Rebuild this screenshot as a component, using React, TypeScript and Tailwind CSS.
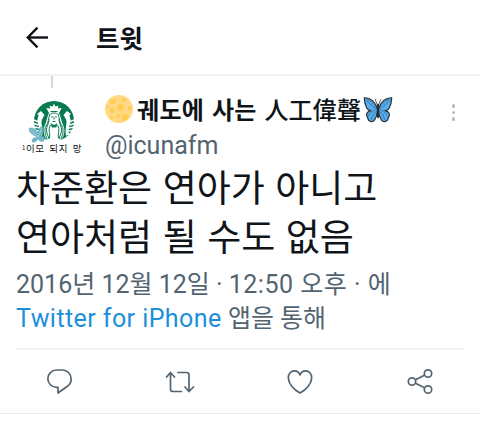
import type { ReactNode } from 'react';

function BackArrow() {
  return (
    <svg viewBox="0 0 24 24" className="h-6 w-6" fill="none" stroke="#0f1419" strokeWidth="2.4">
      <path d="M24 12.5H4" />
      <path d="M13.500 2.700L3.800 12.500l9.700 9.800" />
    </svg>
  );
}

function Avatar() {
  return (
    <div className="relative ml-[2px] h-[60px] w-[60px]">
      <svg viewBox="0 0 60 60" className="h-full w-full">
        <circle cx="32" cy="27" r="20" fill="#087a50" />
        {/* Crown, face and hair */}
        <g fill="#fff">
          <path d="M32 9.500l1.300 3 3.200-.8-.8 2.800 4-.5-3 5.500h-9.400l-3-5.500 4 .5-.8-2.800 3.200.8z" />
          <path d="M26.500 20c2-3 9-3 11 0 2 5 2 8 4 12 1.500 4 1 8-1 12l-3.500 3H27l-3.500-3c-2-4-2.500-8-1-12 2-4 2-7 4-12z" />
          <path d="M15 20l4-3 3.500 4c-1.500 3-3.500 5-3 8 .5 4 1.500 8 .5 13l-3-2c1-5-.5-9-1.500-12-.5-3 1-5 1-7z" />
          <path d="M49 20l-4-3-3.500 4c1.500 3 3.500 5 3 8-.5 4-1.500 8-.5 13l3-2c-1-5 .5-9 1.500-12 .5-3-1-5-1-7z" />
        </g>
        <g fill="none" stroke="#087a50" strokeWidth="1">
          <path d="M28 20c-2 5-1 8-4 12-2 4-1 8 1 13" />
          <path d="M27 25c0 6-4 8-2 14l2 6" />
          <path d="M36 20c2 5 1 8 4 12 2 4 1 8-1 13" />
          <path d="M37 25c0 6 4 8 2 14l-2 6" />
          <path d="M28.500 31c-3 5 0 7-1 13M35.500 31c3 5 0 7 1 13" />
          <path d="M28 20.500c1-2 7-2 8 0M29.300 23h2M32.900 23h2M30.700 27.500h2.800M32 23.500v2" />
          <path d="M28.500 17.500h7" />
        </g>
        {/* Tail fins */}
        <path
          d="M11.500 26l4.500 1.500M11.500 29.500l5 1.500M12.500 33l4.500 1M14 36.500l3.500.5M52.500 26l-4.500 1.500M52.500 29.500l-5 1.500M51.500 33l-4.500 1M50 36.500l-3.500.5M47.500 40l-2.500.3"
          stroke="#fff"
          strokeWidth="1.400"
        />
        <path d="M28.500 28.500c2 3 5 3 7 0l-1 4.500c-1 1-4 1-5 0z" fill="#087a50" />
        <path d="M32 33c-3 3-3.500 7-2.500 14h5c1-7 .5-11-2.500-14z" fill="#fff" />
        <path d="M15 43c-5-2-9-5-8-9 5-1 8 2 9 6 0-5 2-8 5-8 2 4 0 8-3 10 4-1 6 1 4 5-3 2-5 0-6-2-1 3-4 4-6 3-1-2 1-5 5-5z" fill="#5aa9bd" opacity=".85" />
        <path d="M8 35l8 8 4-9" fill="none" stroke="#a5d5de" strokeWidth=".8" />
      </svg>
      <span className="absolute left-0 top-[48px] whitespace-pre font-['Noto_Sans_CJK_KR',sans-serif] text-[9.500px] leading-[12px] tracking-[0.600px] text-[#111] [word-spacing:2px]">
        <span className="align-top text-[6px]">1</span>이모 되지 망
      </span>
    </div>
  );
}

function MoonEmoji() {
  return (
    <svg viewBox="0 0 36 36" className="h-7 w-7 shrink-0">
      <circle cx="18" cy="18" r="18" fill="#ffd983" />
      <g fill="#ffcc4d">
        <circle cx="10.500" cy="8.500" r="3.500" />
        <circle cx="20" cy="16" r="4" />
        <circle cx="24.500" cy="6.500" r="2.500" />
        <circle cx="9" cy="20" r="3" />
        <circle cx="17" cy="27" r="2.300" />
        <circle cx="26" cy="28.500" r="4" />
        <circle cx="32" cy="17" r="2.500" />
        <circle cx="4" cy="15" r="1.500" />
        <circle cx="9" cy="29" r="2" />
      </g>
    </svg>
  );
}

function ButterflyEmoji() {
  return (
    <svg viewBox="0 0 36 36" className="ml-[2px] h-[30px] w-[30px] shrink-0" strokeLinejoin="round">
      <g fill="#55acee" stroke="#292f33" strokeWidth="1.400">
        <path d="M17.500 17C14 9 8 4 1.500 4.500c.5 4 .5 7 2 10 1 3 3 5 6 5.500-4 1-6 3-5 6 .5 2 1.500 2.500 1.500 4 1 4 6 4 8 1 2-3 3-7 3.500-11z" />
        <path d="M18.500 17C22 9 28 4 34.500 4.500c-.5 4-.5 7-2 10-1 3-3 5-6 5.500 4 1 6 3 5 6-.5 2-1.500 2.500-1.500 4-1 4-6 4-8 1-2-3-3-7-3.500-11z" />
      </g>
      <g fill="none" stroke="#292f33" strokeWidth=".5">
        <path d="M17 18C12 16 7 11 3 6M17 18c-3-6-7-9-12-12M17 19c-5 0-8 3-11 8M17 20c-4 3-6 6-7 11" />
        <path d="M19 18c5-2 10-7 14-12M19 18c3-6 7-9 12-12M19 19c5 0 8 3 11 8M19 20c4 3 6 6 7 11" />
        <path d="M17.500 14L14.500 6M18.500 14l3-8" strokeWidth=".9" />
      </g>
      <path d="M18 13v15" stroke="#292f33" strokeWidth="2.400" strokeLinecap="round" />
    </svg>
  );
}

function ActionIcon({ children }: { children: ReactNode }) {
  return (
    <button className="flex h-8 w-8 items-center justify-center">
      <svg
        viewBox="0 0 32 32"
        className="h-8 w-8"
        fill="none"
        stroke="#536471"
        strokeWidth="1.700"
        strokeLinecap="round"
        strokeLinejoin="round"
      >
        {children}
      </svg>
    </button>
  );
}

export default function App() {
  return (
    <div className="h-[424px] w-[480px] overflow-hidden bg-white font-[Roboto,'Noto_Sans_CJK_KR',sans-serif] text-[#0f1419]">
      {/* Header */}
      <header className="flex h-[76px] items-center border-b-2 border-[#f1f3f4] pl-6">
        <BackArrow />
        <h1 className="ml-12 font-['Noto_Sans_CJK_KR',sans-serif] text-[25.500px] font-bold leading-9">트윗</h1>
      </header>

      <article>
        <div className="ml-[51px] h-3 w-0.5 bg-[#cfd9de]" />

        {/* Author */}
        <div className="flex h-[74px] pl-5">
          <div className="pt-1.5">
            <Avatar />
          </div>
          <div className="ml-[23px] flex-1 pt-1">
            <div className="flex h-[34px] items-center whitespace-pre font-['Noto_Sans_CJK_KR',sans-serif] text-[24px] leading-[34px]">
              <MoonEmoji />
              <span className="ml-1 font-bold tracking-[0.300px] [word-spacing:2px]">궤도에 사는 </span>
              <span className="font-medium tracking-[0.200px]">人工偉聲</span>
              <ButterflyEmoji />
            </div>
            <div className="text-[25px] leading-[40px] text-[#536471]">@icunafm</div>
          </div>
          <div className="mr-[25px] flex flex-col gap-[3px] pt-4">
            <i className="h-[3.500px] w-[3.500px] rounded-full bg-[#b3bcc2]" />
            <i className="h-[3.500px] w-[3.500px] rounded-full bg-[#b3bcc2]" />
            <i className="h-[3.500px] w-[3.500px] rounded-full bg-[#b3bcc2]" />
          </div>
        </div>

        {/* Tweet text */}
        <p className="whitespace-pre pl-4 font-['Noto_Sans_CJK_KR',sans-serif] text-[37px] leading-[49px] [word-spacing:2.200px]">
          {'차준환은 연아가 아니고\n연아처럼 될 수도 없음'}
        </p>

        {/* Date and source */}
        <div className="whitespace-pre pl-4 pt-2 text-[25px] leading-[34px] text-[#536471]">
          <div>
            2016년 12월 12일 · <span className="tracking-[0.500px]">12:50 오후 · 에</span>
          </div>
          <div>
            <span className="tracking-[0.430px] text-[#1d8fdb]">Twitter for iPhone</span> 앱을 통해
          </div>
        </div>

        <div className="mx-4 mt-3 h-0.5 bg-[#eff1f2]" />

        {/* Actions */}
        <div className="flex h-[63px] items-center justify-between px-11">
          <ActionIcon>
            <path d="M12.500 4h6a9 9 0 0 1 8.700 9c0 3.400-1.700 6-4.500 7.800L14 27v-5.700h-1.500a8.650 8.650 0 0 1 0-17.300z" />
          </ActionIcon>
          <ActionIcon>
            <path d="M2.500 11L6.500 6.500l4 4.500M6.500 6.500v16.500a2.500 2.500 0 0 0 2.500 2.500h8.500M14 6.500h8.500a2.500 2.500 0 0 1 2.500 2.500v16.500M21 21l4 4.500 4.500-4.500" />
          </ActionIcon>
          <ActionIcon>
            <path d="M16 27C9.500 23.500 4.300 17.500 4.300 11.700c0-4 2.700-6.900 6.200-6.900 2.600 0 4.700 1.700 5.500 4.200.8-2.500 2.900-4.200 5.500-4.200 3.500 0 6.200 2.900 6.200 6.900C27.700 17.500 22.500 23.500 16 27z" />
          </ActionIcon>
          <ActionIcon>
            <circle cx="8" cy="15.500" r="3.700" />
            <circle cx="24" cy="7.500" r="3.700" />
            <circle cx="24" cy="23.500" r="3.700" />
            <path d="M11.500 13.800l9-4.500M11.500 17.200l9 4.500" />
          </ActionIcon>
        </div>
        <div className="h-px bg-[#e9ebec]" />
      </article>
    </div>
  );
}
